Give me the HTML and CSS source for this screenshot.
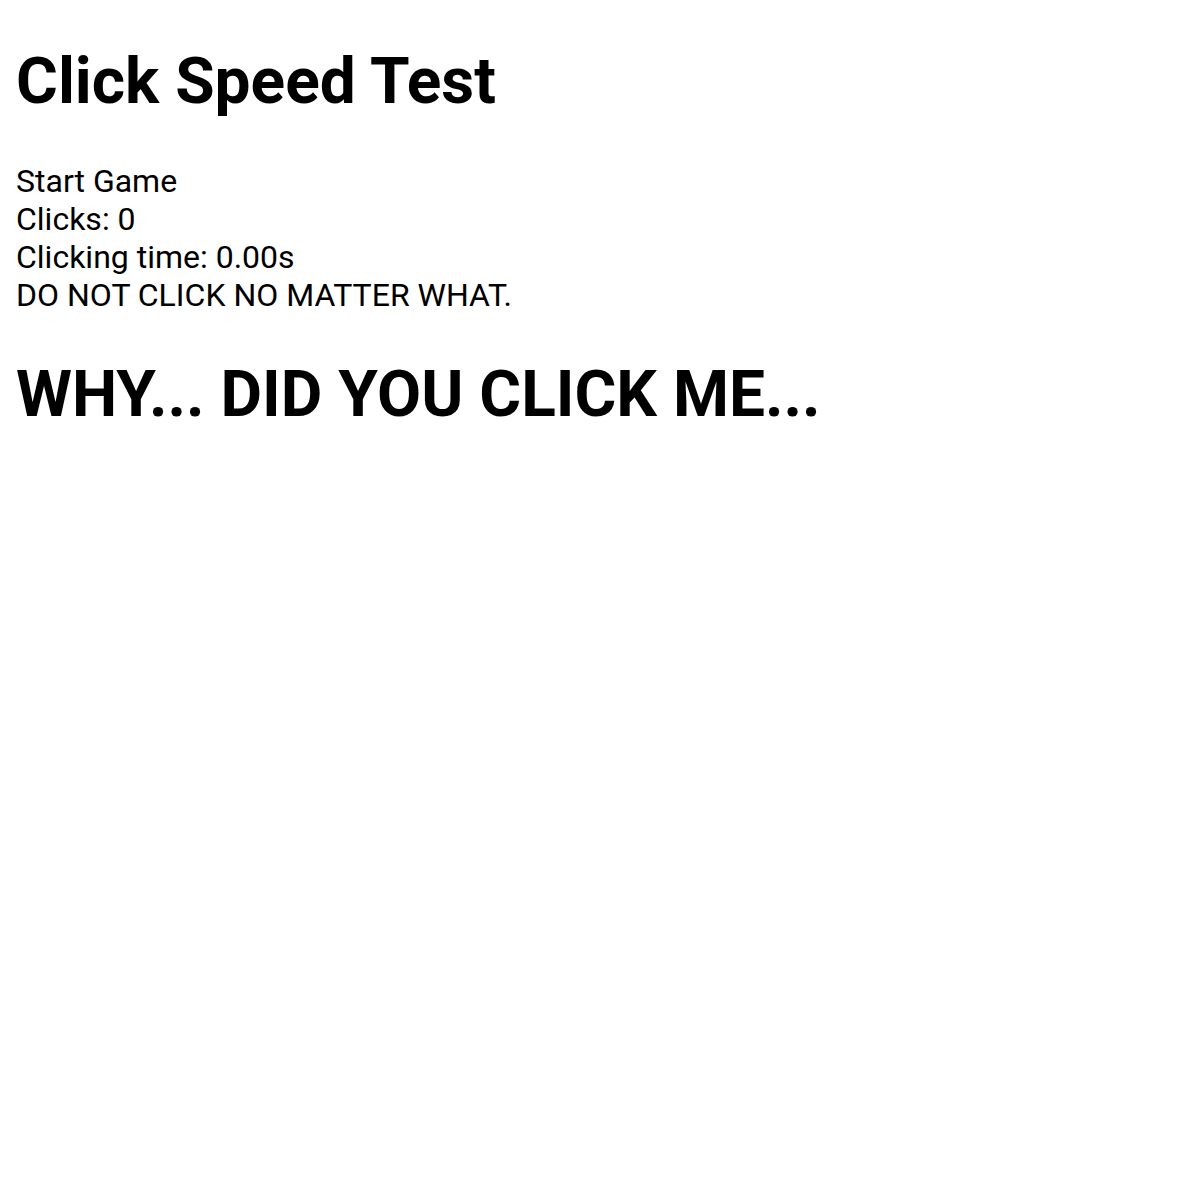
FILE: index.html
```html
<!DOCTYPE html>
<html>
<head>
<meta charset="utf-8">
<link rel="stylesheet" href="styles.css">
</head>
<body>
<h1 class="title">Click Speed Test</h1>
<div class="line">Start Game</div>
<div class="line">Clicks: 0</div>
<div class="line">Clicking time: 0.00s</div>
<div class="line">DO NOT CLICK NO MATTER WHAT.</div>
<h1 class="warn">WHY... DID YOU CLICK ME...</h1>
</body>
</html>
```
FILE: styles.css
```css
html, body { background: #fff; }
body {
  margin: 0 16px 16px;
  font-family: Roboto, "Liberation Sans", sans-serif;
  font-size: 32px;
  color: #000;
}
.title {
  font-size: 64px;
  font-weight: 700;
  margin: 44px 0 43px;
}
.line { line-height: normal; }
.warn {
  font-size: 64px;
  font-weight: 700;
  margin: 43px 0;
}
```
